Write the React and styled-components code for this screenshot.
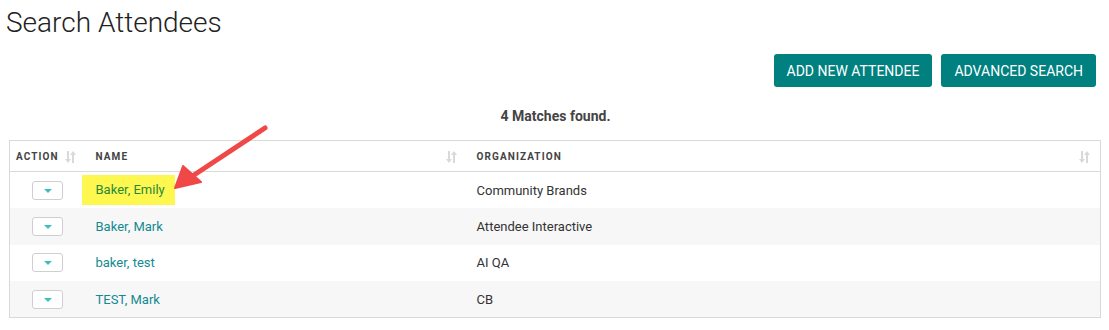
import React from 'react';
import styled, { createGlobalStyle } from 'styled-components';

const GlobalStyle = createGlobalStyle`
  body {
    margin: 0;
    background: #fff;
    font-family: Roboto, "Liberation Sans", sans-serif;
    color: #333;
  }
`;

const attendees = [
  { name: 'Baker, Emily', org: 'Community Brands', marked: true },
  { name: 'Baker, Mark', org: 'Attendee Interactive' },
  { name: 'baker, test', org: 'AI QA' },
  { name: 'TEST, Mark', org: 'CB' },
];

function SortIcon() {
  return (
    <svg width="11" height="12" viewBox="0 0 11 12">
      <g fill="#d9d9d9">
        <rect x="2" y="0" width="2" height="9" />
        <polygon points="0,8 6,8 3,12" />
        <rect x="7" y="3" width="2" height="9" />
        <polygon points="5,4 11,4 8,0" />
      </g>
    </svg>
  );
}

export default function App() {
  return (
    <Page>
      <GlobalStyle />
      <Title>Search Attendees</Title>
      <Toolbar>
        <Button>ADD NEW ATTENDEE</Button>
        <Button>ADVANCED SEARCH</Button>
      </Toolbar>
      <Matches>4 Matches found.</Matches>
      <TableWrap>
        <Table>
          <thead>
            <tr>
              <Th $width="76px">
                <HeadCell>
                  ACTION <SortIcon />
                </HeadCell>
              </Th>
              <Th $width="381px" $pad="10px">
                <HeadCell>
                  NAME <SortIcon />
                </HeadCell>
              </Th>
              <Th $pad="10px">
                <HeadCell>
                  ORGANIZATION <SortIcon />
                </HeadCell>
              </Th>
            </tr>
          </thead>
          <tbody>
            {attendees.map((a, i) => (
              <Row key={a.name} $striped={i % 2 === 1}>
                <Td $center>
                  <DropButton>
                    <Caret />
                  </DropButton>
                </Td>
                <Td $pad="10px">
                  <NameLink $marked={a.marked}>{a.name}</NameLink>
                </Td>
                <Td $pad="10px">{a.org}</Td>
              </Row>
            ))}
          </tbody>
        </Table>
        <Arrow width="110" height="80" viewBox="0 0 110 80">
          <line x1="102" y1="8" x2="28" y2="57" stroke="#f04747" strokeWidth="5" strokeLinecap="round" />
          <polygon points="12,68 20,46 38,62" fill="#f04747" stroke="#f04747" strokeWidth="2" strokeLinejoin="round" />
        </Arrow>
      </TableWrap>
    </Page>
  );
}

const Page = styled.div`
  width: 1109px;
  height: 330px;
  padding: 0 9px 0 9px;
  box-sizing: border-box;
`;
const Title = styled.h1`
  margin: 0;
  padding: 5px 0 0 0;
  margin-left: -3px;
  font-family: Roboto, sans-serif;
  font-weight: 300;
  font-size: 28px;
  line-height: 36px;
  color: #222;
`;
const Toolbar = styled.div`
  display: flex;
  justify-content: flex-end;
  gap: 9px;
  margin-top: 13px;
  padding-right: 4px;
`;
const Button = styled.button`
  height: 33px;
  padding: 0 13px;
  border: none;
  border-radius: 3px;
  background: #00807f;
  color: #fff;
  font-family: Roboto, sans-serif;
  font-size: 14px;
  cursor: pointer;
`;
const Matches = styled.div`
  margin-top: 19px;
  text-align: center;
  font-size: 14px;
  font-weight: 700;
  color: #444;
  line-height: 20px;
  padding-left: 2px;
`;
const TableWrap = styled.div`
  position: relative;
  margin-top: 14px;
`;
const Table = styled.table`
  width: 1092px;
  border-collapse: collapse;
  border: 1px solid #d9d9d9;
  font-size: 13px;
`;
const Th = styled.th`
  width: ${p => p.$width || 'auto'};
  height: 31px;
  padding: 0 10px 0 ${p => p.$pad || '6px'};
  text-align: left;
  font-size: 10px;
  font-weight: 700;
  letter-spacing: 1.1px;
  color: #444;
  border-bottom: 1px solid #d9d9d9;
  box-sizing: border-box;
`;
const HeadCell = styled.div`
  display: flex;
  justify-content: space-between;
  align-items: center;
  padding-top: 1px;
`;
const Row = styled.tr`
  background: ${p => (p.$striped ? '#f7f7f7' : '#fff')};
  height: 36.5px;
`;
const Td = styled.td`
  padding: 0 10px 0 ${p => p.$pad || '0'};
  text-align: ${p => (p.$center ? 'center' : 'left')};
  color: #333;
  vertical-align: middle;
`;
const DropButton = styled.button`
  display: inline-flex;
  align-items: center;
  justify-content: center;
  width: 31px;
  height: 19px;
  padding: 0;
  margin-left: 10px;
  border: 1px solid #cfcfcf;
  border-radius: 3px;
  background: #fff;
  vertical-align: middle;
`;
const Caret = styled.span`
  width: 0;
  height: 0;
  border-left: 4px solid transparent;
  border-right: 4px solid transparent;
  border-top: 4px solid #3dbfc4;
  margin-top: 1px;
`;
const NameLink = styled.a`
  display: inline-block;
  color: ${p => (p.$marked ? '#1f8a3a' : '#138a91')};
  background: ${p => (p.$marked ? '#fdf750' : 'transparent')};
  padding: ${p => (p.$marked ? '7px 10px 8px 14px' : '0')};
  margin: ${p => (p.$marked ? '0 0 0 -14px' : '0')};
  line-height: 15px;
  font-size: 13px;
  cursor: pointer;
`;
const Arrow = styled.svg`
  position: absolute;
  left: 154px;
  top: -20px;
  pointer-events: none;
`;
